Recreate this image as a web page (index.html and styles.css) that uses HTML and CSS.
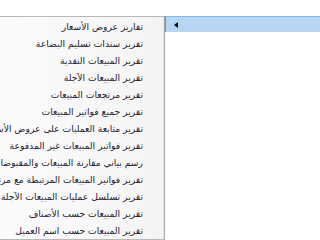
FILE: index.html
```html
<!DOCTYPE html>
<html lang="ar">
<head>
    <meta charset="UTF-8">
    <title>Sales Reports</title>
    <link rel="stylesheet" href="styles.css">
</head>
<body>
    <div class="window">
        <div class="menu" dir="rtl">
            <div class="menu-item">تقارير عروض الأسعار</div>
            <div class="menu-item">تقرير سندات تسليم البضاعة</div>
            <div class="menu-item">تقرير المبيعات النقدية</div>
            <div class="menu-item">تقرير المبيعات الآجلة</div>
            <div class="menu-item">تقرير مرتجعات المبيعات</div>
            <div class="menu-item">تقرير جميع فواتير المبيعات</div>
            <div class="menu-item">تقرير متابعة العمليات على عروض الأسعار</div>
            <div class="menu-item">تقرير فواتير المبيعات غير المدفوعة</div>
            <div class="menu-item">رسم بياني  مقارنة المبيعات والمقبوضات</div>
            <div class="menu-item">تقرير فواتير المبيعات المرتبطة مع مرتجعاتها</div>
            <div class="menu-item">تقرير تسلسل عمليات المبيعات الآجلة</div>
            <div class="menu-item">تقرير المبيعات حسب الأصناف</div>
            <div class="menu-item">تقرير المبيعات حسب اسم العميل</div>
        </div>
        <div class="panel">
            <div class="panel-bar">
                <span class="arrow"></span>
            </div>
        </div>
    </div>
</body>
</html>
```

FILE: styles.css
```css
body {
    margin: 0;
    background: #fff;
    font-family: "DejaVu Sans", Tahoma, sans-serif;
}

.window {
    display: flex;
    padding-top: 16px;
    height: 224px;
}

.menu {
    width: 164px;
    overflow: hidden;
    border-top: 1px solid #b9b9b9;
    border-right: 1px solid #a8a8a8;
    border-bottom: 1px solid #b9b9b9;
    box-shadow: inset -1px 0 0 #e2e2e2;
    background: linear-gradient(to right, #fbfbfb, #f4f4f4);
    padding-top: 1px;
}

.menu-item {
    height: 17px;
    line-height: 17px;
    padding-right: 21px;
    font-size: 9.2px;
    color: #1e2233;
    white-space: nowrap;
    text-align: right;
}

.panel {
    flex: 1;
}

.panel-bar {
    height: 15px;
    background: #b6d6f3;
    border-top: 1px solid #84b8eb;
    border-left: 1px solid #6b8fb5;
    display: flex;
    align-items: center;
    padding-left: 8px;
}

.arrow {
    width: 0;
    height: 0;
    border-top: 3px solid transparent;
    border-bottom: 3px solid transparent;
    border-right: 4px solid #000;
}
```
